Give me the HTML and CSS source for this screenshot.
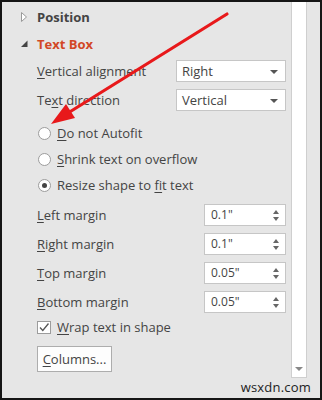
FILE: index.html
```html
<!DOCTYPE html>
<html lang="en">
<head>
    <meta charset="UTF-8">
    <meta name="viewport" content="width=device-width, initial-scale=1.0">
    <title>Format Shape - Text Box</title>
    <link rel="stylesheet" href="styles.css">
</head>
<body>
    <div class="frame">
        <div class="panel">
            <div class="section-head collapsed">
                <svg class="caret" width="18" height="12" viewBox="0 0 18 12"><path d="M2.5 1.5 L7.5 6 L2.5 10.5 Z" fill="#fff" stroke="#9a9a9a" stroke-width="1"/></svg>
                <span>Position</span>
            </div>
            <div class="section-head open">
                <svg class="caret" width="18" height="12" viewBox="0 0 18 12"><path d="M8.5 2.5 L8.5 9 L2 9 Z" fill="#444"/></svg>
                <span>Text Box</span>
            </div>

            <div class="row row-select">
                <label><u>V</u>ertical alignment</label>
                <div class="select">Right<span class="drop"></span></div>
            </div>
            <div class="row row-select second">
                <label>Te<u>x</u>t direction</label>
                <div class="select">Vertical<span class="drop"></span></div>
            </div>

            <div class="options">
                <div class="option"><span class="radio"></span><span><u>D</u>o not Autofit</span></div>
                <div class="option"><span class="radio"></span><span><u>S</u>hrink text on overflow</span></div>
                <div class="option"><span class="radio checked"></span><span>Resize shape to <u>f</u>it text</span></div>
            </div>

            <div class="spin-rows">
                <div class="row row-spin">
                    <label><u>L</u>eft margin</label>
                    <div class="spinner">0.1"<span class="arrows"><i class="up"></i><i class="down"></i></span></div>
                </div>
                <div class="row row-spin">
                    <label><u>R</u>ight margin</label>
                    <div class="spinner">0.1"<span class="arrows"><i class="up"></i><i class="down"></i></span></div>
                </div>
                <div class="row row-spin">
                    <label><u>T</u>op margin</label>
                    <div class="spinner">0.05"<span class="arrows"><i class="up"></i><i class="down"></i></span></div>
                </div>
                <div class="row row-spin">
                    <label><u>B</u>ottom margin</label>
                    <div class="spinner">0.05"<span class="arrows"><i class="up"></i><i class="down"></i></span></div>
                </div>
            </div>

            <div class="option check-row">
                <span class="checkbox">
                    <svg width="12" height="11" viewBox="0 0 12 11"><path d="M2 5.5 L4.8 8.5 L10.5 1.5" fill="none" stroke="#555" stroke-width="1.3"/></svg>
                </span>
                <span><u>W</u>rap text in shape</span>
            </div>

            <button class="columns-btn" type="button"><u>C</u>olumns...</button>
        </div>

        <div class="scrollbar">
            <div class="track"></div>
            <div class="scroll-down"><span class="drop"></span></div>
        </div>

        <svg class="pointer" width="322" height="400" viewBox="0 0 322 400">
            <line x1="227" y1="14" x2="68" y2="113" stroke="#e8191b" stroke-width="3.2" stroke-linecap="round"/>
            <polygon points="51,124 75,118 66,104" fill="#e8191b"/>
        </svg>

        <div class="watermark">wsxdn.com</div>
    </div>
</body>
</html>
```

FILE: styles.css
```css
body {
    margin: 0;
    font-family: "Open Sans", sans-serif;
    font-size: 13px;
    color: #444;
}
.frame {
    position: relative;
    width: 322px;
    height: 400px;
    box-sizing: border-box;
    border: 2px solid #161616;
    background: #e6e6e6;
    display: flex;
    overflow: hidden;
}
.panel {
    flex: 1;
    padding: 0 5px 0 35px;
}
u {
    text-decoration: underline;
    text-underline-offset: 2px;
}

/* section headers */
.section-head {
    display: flex;
    align-items: center;
    margin-left: -18px;
    font-size: 13px;
    font-weight: bold;
}
.section-head.collapsed {
    height: 30px;
}
.section-head.open {
    height: 24px;
    color: #d24726;
}

/* label + control rows */
.row {
    display: flex;
    align-items: center;
    justify-content: space-between;
    font-size: 13px;
}
.row-select {
    height: 30px;
}
.row-select.second {
    height: 28px;
}
.select {
    position: relative;
    width: 110px;
    height: 22px;
    box-sizing: border-box;
    background: #fff;
    border: 1px solid #c6c6c6;
    padding-left: 5px;
    line-height: 20px;
    font-size: 13px;
}
.drop {
    position: absolute;
    right: 7px;
    top: 9px;
    border-left: 4px solid transparent;
    border-right: 4px solid transparent;
    border-top: 4px solid #555;
}

/* radio options */
.options {
    padding-top: 6px;
}
.option {
    display: flex;
    align-items: center;
    height: 26px;
    font-size: 13px;
}
.radio {
    width: 13px;
    height: 13px;
    box-sizing: border-box;
    border: 1px solid #9c9c9c;
    border-radius: 50%;
    background: #fff;
    margin: 0 6px 0 1px;
    display: flex;
    align-items: center;
    justify-content: center;
}
.radio.checked::after {
    content: "";
    width: 5px;
    height: 5px;
    border-radius: 50%;
    background: #444;
}

/* spinners */
.spin-rows {
    padding-top: 2px;
}
.row-spin {
    height: 29px;
}
.spinner {
    position: relative;
    width: 82px;
    height: 22px;
    box-sizing: border-box;
    background: #fff;
    border: 1px solid #c6c6c6;
    padding-left: 6px;
    line-height: 20px;
    font-size: 12px;
}
.arrows {
    position: absolute;
    right: 6px;
    top: 5px;
    display: flex;
    flex-direction: column;
    gap: 3px;
}
.arrows i {
    width: 0;
    height: 0;
    border-left: 3px solid transparent;
    border-right: 3px solid transparent;
}
.arrows .up {
    border-bottom: 4px solid #666;
}
.arrows .down {
    border-top: 4px solid #666;
}

/* checkbox */
.check-row {
    height: 22px;
}
.checkbox {
    width: 14px;
    height: 13px;
    box-sizing: border-box;
    border: 1px solid #9c9c9c;
    background: #fff;
    margin-right: 6px;
    display: flex;
    align-items: center;
    justify-content: center;
}

.columns-btn {
    display: block;
    margin-top: 8px;
    width: 75px;
    height: 26px;
    background: #fdfdfd;
    border: 1px solid #adadad;
    font-family: inherit;
    font-size: 13px;
    color: #444;
    padding: 0;
}

/* scrollbar */
.scrollbar {
    width: 16px;
    height: 378px;
    margin: -2px 13px 0 0;
    box-sizing: border-box;
    border: 1px solid #cfcfcf;
    border-top: none;
    background: #fff;
    display: flex;
    flex-direction: column;
}
.track {
    flex: 1;
}
.scroll-down {
    position: relative;
    height: 16px;
}
.scroll-down .drop {
    right: 3px;
    top: 6px;
    border-top-color: #888;
}

.pointer {
    position: absolute;
    left: -2px;
    top: -2px;
    pointer-events: none;
}
.watermark {
    position: absolute;
    right: 9px;
    bottom: 2px;
    font-size: 13px;
    color: #222;
    letter-spacing: 0.2px;
}
```
